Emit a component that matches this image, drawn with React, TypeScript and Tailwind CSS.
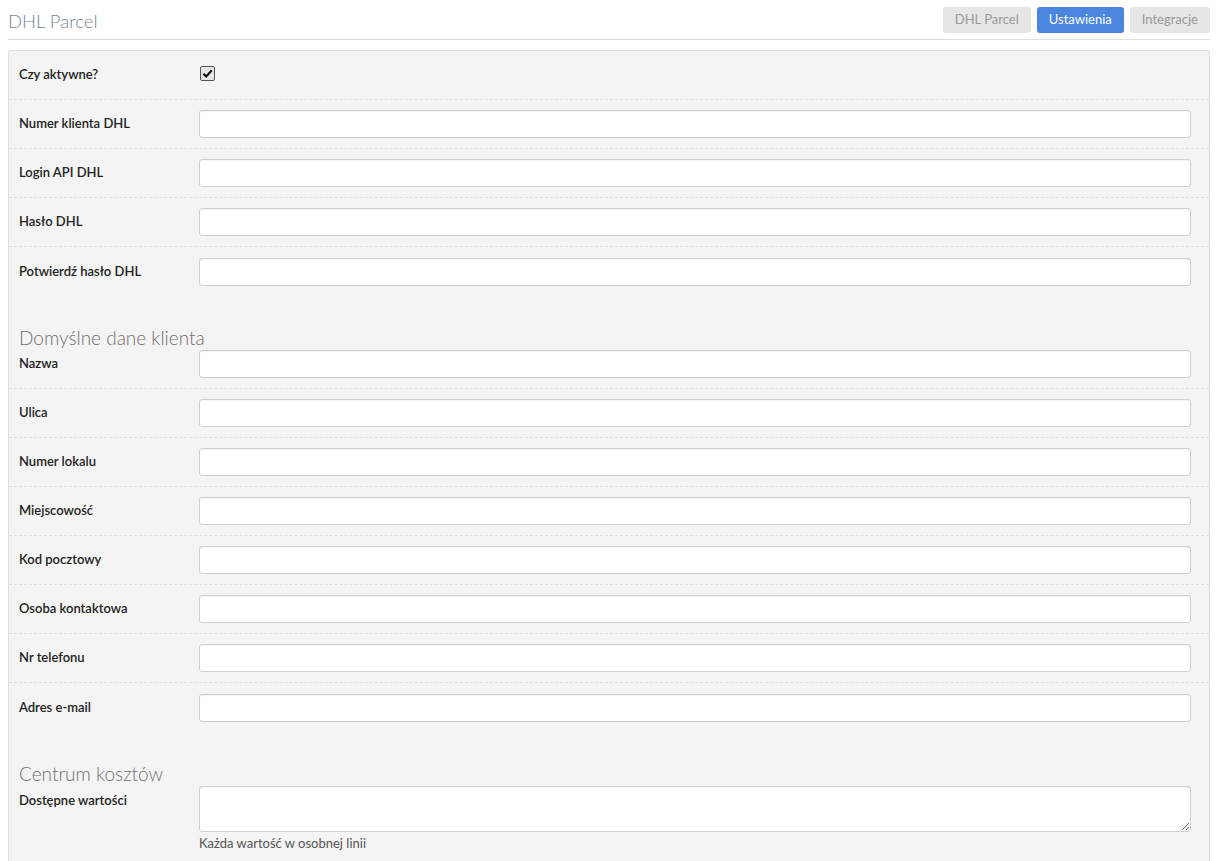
import { useState } from "react";

const accountFields = [
  "Numer klienta DHL",
  "Login API DHL",
  "Hasło DHL",
  "Potwierdź hasło DHL",
];

const clientFields = [
  "Nazwa",
  "Ulica",
  "Numer lokalu",
  "Miejscowość",
  "Kod pocztowy",
  "Osoba kontaktowa",
  "Nr telefonu",
  "Adres e-mail",
];

function Row({ label, last }: { label: string; last?: boolean }) {
  return (
    <div
      className={`flex h-[49px] items-center pl-[10px] pr-[18px] ${
        last ? "" : "border-b border-dashed border-[#dedede]"
      }`}
    >
      <label className="w-[180px] shrink-0 text-[13px] font-semibold text-[#222]">
        {label}
      </label>
      <input
        type="text"
        className="h-[28px] flex-1 rounded-[3px] border border-[#cfcfcf] bg-white px-2 text-[13px] shadow-[inset_0_1px_1px_rgba(0,0,0,0.05)] outline-none"
      />
    </div>
  );
}

export default function App() {
  const [active, setActive] = useState(true);
  const [tab, setTab] = useState("Ustawienia");

  return (
    <div className="min-h-screen bg-white pl-2 pr-[12px] font-['Lato','Liberation_Sans',sans-serif]">
      {/* Header */}
      <div className="flex h-[40px] items-center justify-between border-b border-[#dedede]">
        <h1 className="pt-[4px] text-[18.5px] font-light text-[#73859b]">DHL Parcel</h1>
        <div className="flex gap-[6px] self-start pt-[7px]">
          {["DHL Parcel", "Ustawienia", "Integracje"].map((t) => (
            <button
              key={t}
              onClick={() => setTab(t)}
              className={`h-[26px] rounded-[3px] px-3 text-[13px] ${
                tab === t ? "bg-[#4a86e0] text-white" : "bg-[#e6e6e6] text-[#999]"
              }`}
            >
              {t}
            </button>
          ))}
        </div>
      </div>

      {/* Settings panel */}
      <div className="mt-[10px] rounded-t-[3px] border border-b-0 border-[#dddddd] bg-[#f4f4f4] pb-[10px]">
        <div className="flex h-[49px] items-center border-b border-dashed border-[#dedede] pl-[10px] pr-[18px]">
          <label className="w-[180px] shrink-0 text-[13px] font-semibold text-[#222]">
            Czy aktywne?
          </label>
          <button
            onClick={() => setActive(!active)}
            className="-mt-[3px] ml-[1px] flex h-[15px] w-[15px] items-center justify-center rounded-[2px] border border-[#555] bg-[#e6e6e6]"
          >
            {active && (
              <svg viewBox="0 0 12 12" className="h-[11px] w-[11px]">
                <path d="M1.5 6.2 L4.6 9.2 L10.6 2.6" fill="none" stroke="#111" strokeWidth="2.4" />
              </svg>
            )}
          </button>
        </div>

        {accountFields.map((f, i) => (
          <Row key={f} label={f} last={i === accountFields.length - 1} />
        ))}

        <h2 className="mt-[31px] pl-[10px] text-[19px] font-light leading-[22px] text-[#6f6f6f]">
          Domyślne dane klienta
        </h2>
        <div className="-mt-[9px]">
          {clientFields.map((f, i) => (
            <Row key={f} label={f} last={i === clientFields.length - 1} />
          ))}
        </div>

        <h2 className="mt-[31px] pl-[10px] text-[19px] font-light leading-[22px] text-[#6f6f6f]">
          Centrum kosztów
        </h2>
        <div className="flex items-start pl-[10px] pr-[18px] pt-[1px]">
          <label className="w-[180px] shrink-0 pt-[5px] text-[13px] font-semibold text-[#222]">
            Dostępne wartości
          </label>
          <div className="flex-1">
            <textarea className="block h-[46px] w-full rounded-[3px] border border-[#cfcfcf] bg-white px-2 text-[13px] shadow-[inset_0_1px_1px_rgba(0,0,0,0.05)] outline-none" />
            <p className="mt-[2px] text-[13px] text-[#555]">Każda wartość w osobnej linii</p>
          </div>
        </div>
      </div>
    </div>
  );
}
